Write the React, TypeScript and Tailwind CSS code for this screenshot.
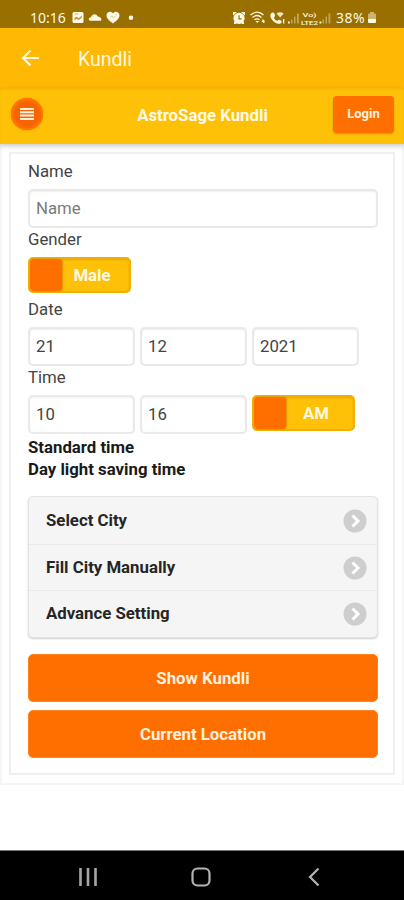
import { clsx } from 'clsx';

// ─── Status bar ────────────────────────────────

function StatusBar() {
  return (
    <div className="flex h-[28px] shrink-0 items-end justify-between bg-[#996f00] pl-[30px] pr-[27px] text-[#fff8e4]">
      <div className="flex h-[21px] items-center">
        <span className="w-[36px] whitespace-nowrap font-['Noto_Sans',sans-serif] text-[14px] leading-[21px]">
          10:16
        </span>
        <svg width="72" height="21" viewBox="66 7 72 21" fill="currentColor">
          {/* gallery */}
          <rect x="72.5" y="12" width="11" height="11" rx="1.5" />
          <path d="M74.5 20.5v-2.500l2-1.200 2.300 1.400 3-2.600v2l-3 2.400-2.300-1.300z" fill="#b8933a" />
          <path d="M74.500 14h4" stroke="#d3b978" />
          {/* cloud */}
          <path d="M91 20.800c-3 0-2.800-3.600 0-3.600.8-3.500 5.500-4 6.600-.8 4 0 5 4.400 2.400 4.400z" />
          {/* heart */}
          <path d="M113 23.500c-2-1.500-6.500-4.800-6.500-8 0-3.700 4.600-5 6.500-2 1.900-3 6.500-1.700 6.500 2 0 3.200-4.500 6.500-6.500 8z" />
          <path d="M110 17.500l2-1.500 1.500 2 3.500-3.500" fill="none" stroke="#d9c48c" strokeWidth=".8" />
          <circle cx="131" cy="17.800" r="2.300" />
        </svg>
      </div>
      <div className="flex h-[21px] items-center">
        <svg width="104" height="21" viewBox="232 7 104 21" fill="currentColor">
          {/* alarm */}
          <circle cx="239" cy="18.300" r="5.600" />
          <path d="M233 15.500v-3.500h4zM245 15.500v-3.500h-4zM234 24v-3l3 3zM244 24v-3l-3 3z" />
          <path d="M239 15.300v3.500h2.500" fill="none" stroke="#996f00" strokeWidth="1.200" />
          {/* wifi */}
          <g fill="none" stroke="currentColor" strokeWidth="1.300">
            <path d="M250.500 15c4-3.700 9-3.700 13 0" />
            <path d="M252.500 17.500c3-2.600 6-2.600 9 0" />
            <path d="M254.500 19.800c2-1.500 3-1.500 5 0" />
          </g>
          <path d="M255.500 21l1.800 2 1.800-2zM261.500 22l1.500-3.200 1.500 3.200zM263 20h1.500v3h-1.500z" />
          {/* wifi call */}
          <path d="M271.500 13c1.500-.8 2.500-.5 3 .8l.6 2c.2.900-1.200 1.200-1.100 1.900.4 1.500 1.400 2.500 2.900 3 .8.200 1.100-1.300 2-1l2 .8c1 .5 1 1.500.2 2.500-3.300 3.600-14.300-5.400-9.600-10z" />
          <path d="M276.500 13.500c2.400-1.800 5-1.800 7.200 0l-3.600 4z" opacity=".85" />
          <path d="M283 19h1.300v4.500h-1.300z" />
          {/* signal 1 */}
          <path d="M288 21.500h1.800v2h-1.800z" />
          <path d="M291 19.500h1.500v4h-1.500zM294 16.500h1.500v7h-1.500zM297 13.500h1.800v10h-1.800z" opacity=".4" />
          {/* signal 2 */}
          <path d="M319.500 21.500h1.800v2h-1.800z" />
          <path d="M322.500 19.500h1.500v4h-1.500zM325.500 16.500h1.500v7h-1.500zM328.500 13.500h1.800v10h-1.800z" opacity=".4" />
          <text x="302.500" y="17" fontSize="6" fontWeight="500" textLength="14" lengthAdjust="spacingAndGlyphs" fontFamily="Roboto, sans-serif">
            Vo)
          </text>
          <text x="301" y="25" fontSize="6" fontWeight="500" textLength="17" lengthAdjust="spacingAndGlyphs" fontFamily="Roboto, sans-serif">
            LTE2
          </text>
        </svg>
        <span className="w-[31px] whitespace-nowrap font-['Noto_Sans',sans-serif] text-[14px] leading-[21px] tracking-[0.5px]">
          38%
        </span>
        <svg width="10" height="21" viewBox="0 0 10 21" fill="currentColor">
          <path d="M3 5h4v1.500h1a1 1 0 0 1 1 1v4.500h-8v-4.500a1 1 0 0 1 1-1h1z" opacity=".5" />
          <path d="M1 12h8v3a1 1 0 0 1-1 1h-6a1 1 0 0 1-1-1z" />
        </svg>
      </div>
    </div>
  );
}

// ─── Headers ───────────────────────────────────

function AppBar() {
  return (
    <div className="flex h-[60px] shrink-0 items-center bg-[#ffb803] pl-[21px] text-[#fff8e0]">
      <svg width="19" height="18" viewBox="0 0 19 18" fill="none" stroke="currentColor" strokeWidth="2.200">
        <path d="M18 9H2.500M9.500 1.500L2 9l7.500 7.500" />
      </svg>
      <span className="ml-[38px] mt-[3px] text-[19.500px]">Kundli</span>
    </div>
  );
}

function SiteHeader() {
  return (
    <div className="z-10 flex h-[56px] shrink-0 items-center justify-between bg-[#ffc107] pl-[11px] pr-[10px] shadow-[inset_0_2px_2px_rgba(210,140,0,0.2),0_2px_5px_rgba(0,0,0,0.22)]">
      <button className="mb-[5px] flex size-[32px] items-center justify-center rounded-full bg-[#f96300] shadow-[inset_0_0_3px_2px_#ff7d00,0_0_2px_#ef8b00]">
        <svg width="14" height="12" viewBox="0 0 14 12" fill="#fff3df">
          <path d="M0 0h14v2H0zM0 3.300h14v2H0zM0 6.600h14v2H0zM0 9.900h14v2H0z" />
        </svg>
      </button>
      <span className="ml-[29px] text-[16.800px] font-bold text-[#fffbe9]">AstroSage Kundli</span>
      <button className="mb-[4px] h-[37px] w-[61px] rounded-[4px] bg-[#ff6f00] text-[13px] font-bold text-[#fff4e4] shadow-[0_1px_2px_rgba(150,80,0,0.4)]">
        Login
      </button>
    </div>
  );
}

// ─── Form controls ─────────────────────────────

function Label({ text, className }: { text: string; className?: string }) {
  return <label className={clsx('block h-[22px] text-[16.800px] leading-[23px] text-[#444]', className)}>{text}</label>;
}

function Field({ value, placeholder, className }: { value?: string; placeholder?: string; className: string }) {
  return (
    <input
      defaultValue={value}
      placeholder={placeholder}
      className={clsx(
        'h-[39px] rounded-[5px] border-2 border-[#e9e9e9] bg-white px-[6px] pb-[1px] text-[16.800px] text-[#444] shadow-[inset_0_1px_2px_rgba(0,0,0,0.06)] outline-none placeholder:text-[#7b7b7b]',
        className,
      )}
    />
  );
}

function Toggle({ text }: { text: string }) {
  return (
    <button className="flex h-[36px] w-[103px] rounded-[5px] border-2 border-[#efb000] bg-[#ffc107] shadow-[inset_0_1px_2px_rgba(150,90,0,0.25)]">
      <span className="h-full w-[32px] rounded-[4px] bg-[#ff6f00] shadow-[1px_0_2px_rgba(190,90,0,0.5)]" />
      <span className="flex-1 pr-[7px] text-center text-[16.800px] font-bold leading-[32px] text-[#fff9e6]">{text}</span>
    </button>
  );
}

function ListRow({ text, className }: { text: string; className: string }) {
  return (
    <li className={clsx('flex items-center justify-between pl-[17px] pr-[10px]', className)}>
      <span className="text-[16.800px] font-bold text-[#262626]">{text}</span>
      <svg width="24" height="24" viewBox="0 0 24 24">
        <circle cx="12" cy="12" r="11.500" fill="#cecece" />
        <path d="M9.500 6.500L15 12l-5.500 5.500" fill="none" stroke="#fff" strokeWidth="3" />
      </svg>
    </li>
  );
}

function ActionButton({ text }: { text: string }) {
  return (
    <button className="h-[48px] w-full rounded-[5px] border border-[#ff8420] bg-[#ff6f00] pt-[2px] text-[16.800px] font-bold text-[#fff0df]">
      {text}
    </button>
  );
}

// ─── Navigation bar ────────────────────────────

function NavBar() {
  return (
    <div className="flex h-[50px] shrink-0 items-center justify-between border-t border-[#777] bg-black pl-[78px] pr-[84px] pt-[3px]">
      <svg width="20" height="20" viewBox="0 0 20 20" stroke="#a6a6a6" strokeWidth="2.600">
        <path d="M2.500 1v18M10 1v18M17.500 1v18" />
      </svg>
      <svg className="mr-[5px]" width="20" height="20" viewBox="0 0 20 20" fill="none" stroke="#b4b4b4" strokeWidth="2.200">
        <rect x="1.500" y="1.500" width="17" height="17" rx="5" />
      </svg>
      <svg width="12" height="20" viewBox="0 0 12 20" fill="none" stroke="#b4b4b4" strokeWidth="2.200">
        <path d="M10.500 1.500L2 10l8.500 8.500" />
      </svg>
    </div>
  );
}

// ─── Page ──────────────────────────────────────

export default function App() {
  return (
    <div className="flex h-[900px] w-[404px] flex-col overflow-hidden bg-white font-[Roboto,sans-serif]">
      <StatusBar />
      <AppBar />
      <SiteHeader />

      <main className="h-[641px] shrink-0 border-x-2 border-b-2 border-[#f5f5f5] px-[7px] pb-[8px] pt-[8px]">
        <div className="h-full border-2 border-[#f0f0f0] px-[17px] pt-[6px]">
          <Label text="Name" className="mb-[7px]" />
          <Field placeholder="Name" className="block w-[350px]" />

          <Label text="Gender" className="mb-[7px]" />
          <Toggle text="Male" />

          <Label text="Date" className="mb-[7px] mt-[5px]" />
          <div className="flex gap-[5px]">
            <Field value="21" className="w-[107px]" />
            <Field value="12" className="w-[107px]" />
            <Field value="2021" className="w-[107px]" />
          </div>

          <Label text="Time" className="mb-[7px]" />
          <div className="flex gap-[5px]">
            <Field value="10" className="w-[107px]" />
            <Field value="16" className="w-[107px]" />
            <Toggle text="AM" />
          </div>

          <p className="mt-[2px] text-[16.800px] font-bold leading-[22px] text-[#1a1a1a]">Standard time</p>
          <p className="text-[16.800px] font-bold leading-[22px] text-[#1a1a1a]">Day light saving time</p>

          <ul className="mt-[16px] h-[142px] w-[350px] rounded-[5px] border border-[#e3e3e3] bg-[#f5f5f5] shadow-[0_1px_2px_rgba(0,0,0,0.2)]">
            <ListRow text="Select City" className="h-[47px]" />
            <ListRow text="Fill City Manually" className="h-[46px] border-t border-[#e9e9e9]" />
            <ListRow text="Advance Setting" className="h-[47px] border-t border-[#e9e9e9]" />
          </ul>

          <div className="mt-[16px] flex w-[350px] flex-col gap-[8px]">
            <ActionButton text="Show Kundli" />
            <ActionButton text="Current Location" />
          </div>
        </div>
      </main>

      <div className="flex-1" />
      <NavBar />
    </div>
  );
}
